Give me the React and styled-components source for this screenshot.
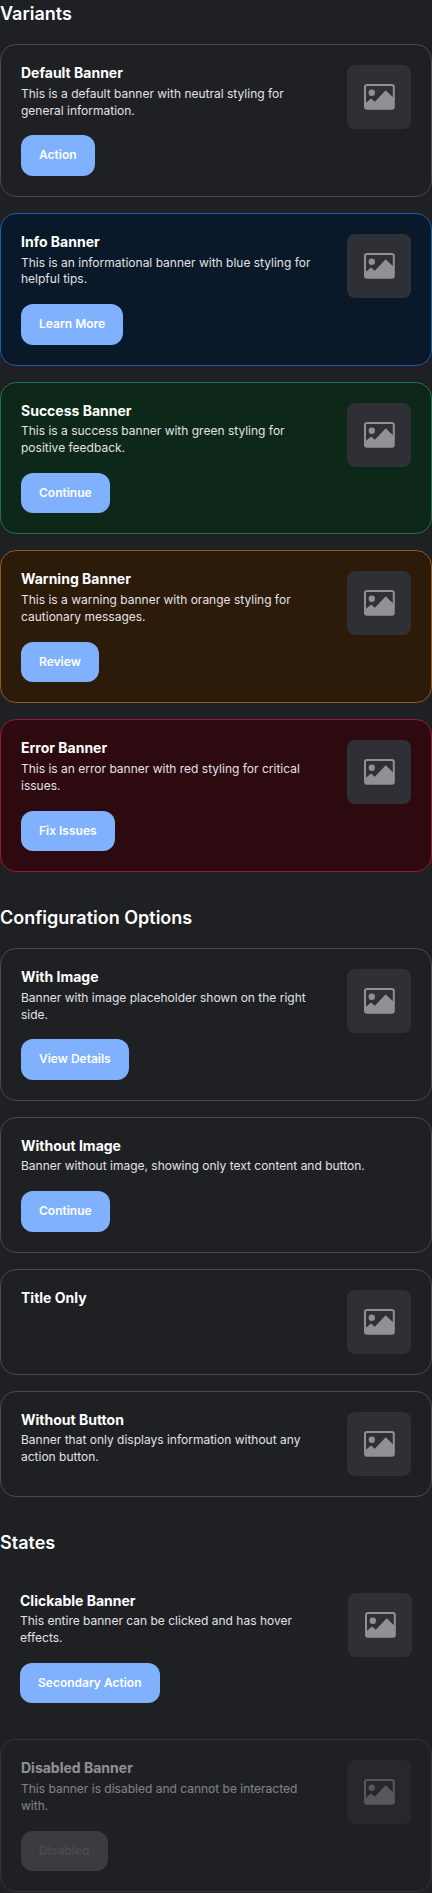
import React from "react";
import styled, { createGlobalStyle, css } from "styled-components";

const GlobalStyle = createGlobalStyle`
  *, *::before, *::after { box-sizing: border-box; }
  html, body { margin: 0; background: #1f2023; }
  body { font-family: Inter, "Liberation Sans", sans-serif; color: #fff; }
`;

const tones = {
  default: { background: "#1f2023", border: "#4a4a4e" },
  info: { background: "#0a1929", border: "#2459a9" },
  success: { background: "#0d2818", border: "#24704a" },
  warning: { background: "#2d1b0a", border: "#8f5a22" },
  error: { background: "#2d0a0f", border: "#8f1f33" },
};

const Page = styled.main`
  display: flex;
  flex-direction: column;
  gap: 32px;
`;

const Section = styled.section`
  display: flex;
  flex-direction: column;
  gap: 16px;
`;

const SectionTitle = styled.h2`
  margin: 0;
  font-size: 18px;
  font-weight: 600;
  line-height: 28px;
`;

const Card = styled.article`
  display: flex;
  align-items: flex-start;
  gap: 24px;
  padding: 20px;
  border-radius: 16px;
  background: ${({ $tone }) => tones[$tone].background};
  border: ${({ $tone, $clickable }) => ($clickable ? "0" : `1px solid ${tones[$tone].border}`)};
  ${({ $clickable }) => $clickable && css`cursor: pointer;`}
  ${({ $disabled }) => $disabled && css`opacity: 0.5;`}
`;

const Content = styled.div`
  flex: 1;
  min-width: 0;
  display: flex;
  flex-direction: column;
  align-items: flex-start;
`;

const Title = styled.h3`
  margin: 0;
  font-size: 14px;
  font-weight: 700;
  line-height: 1.2;
`;

const Description = styled.p`
  margin: 4px 0 0;
  font-size: 12px;
  font-weight: 400;
  line-height: 1.4;
  color: #e2e2e5;
`;

const ActionButton = styled.button`
  margin: 16px 0 0;
  padding: 13px 18px;
  border: 0;
  border-radius: 12px;
  background: #80b1ff;
  color: #fff;
  font: 600 12px/1.2 Inter, "Liberation Sans", sans-serif;
  cursor: pointer;

  &:disabled {
    background: #58595e;
    color: #76777c;
    cursor: default;
  }
`;

const Thumbnail = styled.div`
  display: flex;
  align-items: center;
  justify-content: center;
  flex: none;
  width: 64px;
  height: 64px;
  border-radius: 8px;
  background: #2f3035;
  color: #909097;
`;

function PictureIcon() {
  return (
    <svg width="32" height="32" viewBox="0 0 32 32" aria-hidden="true">
      <rect x="2" y="4" width="28.8" height="23.8" rx="2" fill="none" stroke="currentColor" strokeWidth="2" />
      <circle cx="8.8" cy="11.7" r="3.2" fill="currentColor" />
      <path d="M2 22.6 8 17.6 11.8 20.8 22.7 9.2 31 17.2V26.7q0 1.2-1.2 1.2H3.1q-1.1 0-1.1-1.2Z" fill="currentColor" />
    </svg>
  );
}

function Banner({ tone = "default", title, text, action, image = true, clickable, disabled }) {
  return (
    <Card $tone={tone} $clickable={clickable} $disabled={disabled}>
      <Content>
        <Title>{title}</Title>
        {text && <Description>{text}</Description>}
        {action && <ActionButton disabled={disabled}>{action}</ActionButton>}
      </Content>
      {image && (
        <Thumbnail>
          <PictureIcon />
        </Thumbnail>
      )}
    </Card>
  );
}

export default function App() {
  return (
    <>
      <GlobalStyle />
      <Page>
        <Section>
          <SectionTitle>Variants</SectionTitle>
          <Banner title="Default Banner" text="This is a default banner with neutral styling for general information." action="Action" />
          <Banner tone="info" title="Info Banner" text="This is an informational banner with blue styling for helpful tips." action="Learn More" />
          <Banner tone="success" title="Success Banner" text="This is a success banner with green styling for positive feedback." action="Continue" />
          <Banner tone="warning" title="Warning Banner" text="This is a warning banner with orange styling for cautionary messages." action="Review" />
          <Banner tone="error" title="Error Banner" text="This is an error banner with red styling for critical issues." action="Fix Issues" />
        </Section>
        <Section>
          <SectionTitle>Configuration Options</SectionTitle>
          <Banner title="With Image" text="Banner with image placeholder shown on the right side." action="View Details" />
          <Banner title="Without Image" text="Banner without image, showing only text content and button." action="Continue" image={false} />
          <Banner title="Title Only" />
          <Banner title="Without Button" text="Banner that only displays information without any action button." />
        </Section>
        <Section>
          <SectionTitle>States</SectionTitle>
          <Banner clickable title="Clickable Banner" text="This entire banner can be clicked and has hover effects." action="Secondary Action" />
          <Banner disabled title="Disabled Banner" text="This banner is disabled and cannot be interacted with." action="Disabled" />
        </Section>
      </Page>
    </>
  );
}
